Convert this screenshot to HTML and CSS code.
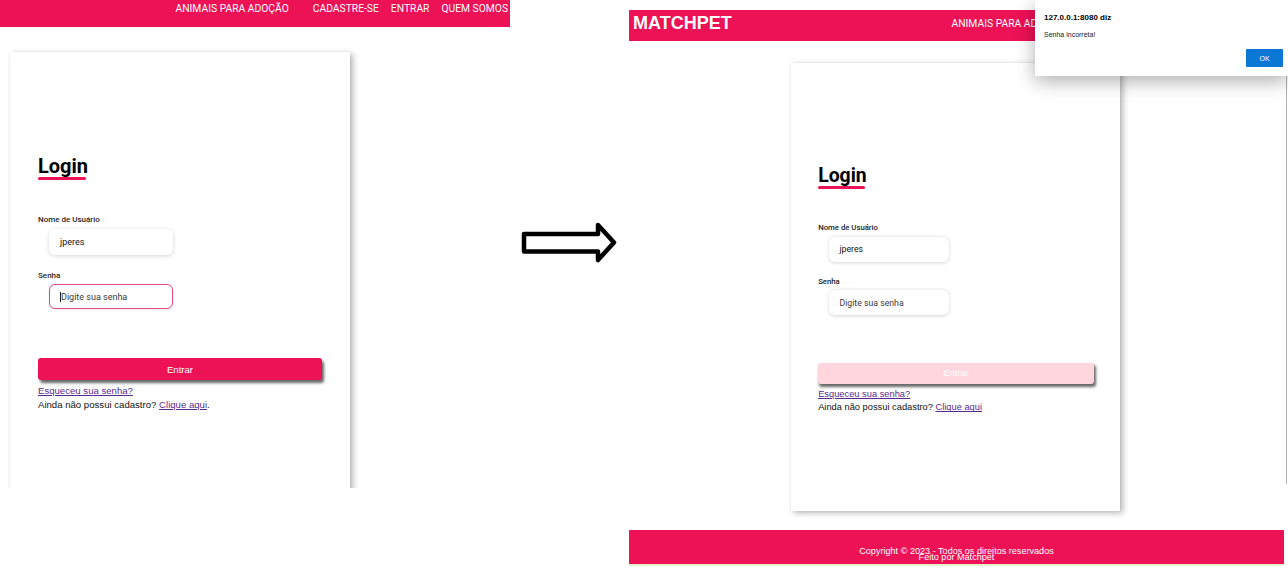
FILE: index.html
```html
<!DOCTYPE html>
<html lang="pt-BR">
<head>
<meta charset="utf-8">
<title>MatchPet - Login</title>
<link rel="stylesheet" href="styles.css">
</head>
<body>
<div class="canvas">
  <section class="shot shot-left">
    <nav class="topnav topnav-left">
      <div class="nav-links">
        <a class="nav-link nav-first">ANIMAIS PARA ADOÇÃO</a>
        <a class="nav-link">CADASTRE-SE</a>
        <a class="nav-link">ENTRAR</a>
        <a class="nav-link">QUEM SOMOS</a>
      </div>
    </nav>
    <div class="card card-left">
      <div class="card-body">
        <h1 class="title">Login</h1>
        <div class="label">Nome de Usuário</div>
        <div class="field"><span class="field-value">jperes</span></div>
        <div class="label label-senha">Senha</div>
        <div class="field field-focus"><span class="caret"></span><span class="field-ph">Digite sua senha</span></div>
        <div class="btn">Entrar</div>
        <div class="links">
          <a class="link">Esqueceu sua senha?</a><br>
          Ainda não possui cadastro? <a class="link">Clique aqui</a>.
        </div>
      </div>
    </div>
  </section>

  <svg class="arrow" width="102" height="46" viewBox="0 0 102 46" aria-hidden="true">
    <path d="M6 14 L80 14 L80 5 L96 22.5 L80 40 L80 31.5 L6 31.5 Z" fill="none" stroke="#000" stroke-width="4.5" stroke-linejoin="round"/>
  </svg>

  <section class="shot shot-right">
    <nav class="topnav topnav-right">
      <span class="brand">MATCHPET</span>
      <div class="nav-links nav-links-right">
        <a class="nav-link nav-first">ANIMAIS PARA ADOÇÃO</a>
        <a class="nav-link">CADASTRE-SE</a>
        <a class="nav-link">ENTRAR</a>
        <a class="nav-link">QUEM SOMOS</a>
      </div>
    </nav>
    <div class="card card-right">
      <div class="card-body">
        <h1 class="title">Login</h1>
        <div class="label">Nome de Usuário</div>
        <div class="field"><span class="field-value">jperes</span></div>
        <div class="label label-senha">Senha</div>
        <div class="field field-plain"><span class="field-ph">Digite sua senha</span></div>
        <div class="btn btn-disabled">Entrar</div>
        <div class="links">
          <a class="link">Esqueceu sua senha?</a><br>
          Ainda não possui cadastro? <a class="link">Clique aqui</a>
        </div>
      </div>
    </div>
    <footer class="footer">
      <p>Copyright © 2023 - Todos os direitos reservados</p>
      <p>Feito por Matchpet</p>
    </footer>
    <div class="footer-line"></div>
  </section>

  <div class="edge-line"></div>

  <div class="dialog">
    <div class="dialog-title">127.0.0.1:8080 diz</div>
    <div class="dialog-msg">Senha incorreta!</div>
    <div class="dialog-actions"><span class="dialog-ok">OK</span></div>
  </div>
</div>
</body>
</html>
```

FILE: styles.css
```css
* { box-sizing: border-box; margin: 0; padding: 0; }
html, body { width: 1288px; height: 571px; overflow: hidden; background: #fff; }
body { font-family: "Liberation Sans", Arial, sans-serif; color: #111; }

.canvas { position: relative; width: 1288px; height: 571px; }

.shot { position: absolute; overflow: hidden; background: #fff; display: flow-root; }
.shot-left { left: 0; top: 0; width: 510px; height: 488px; }
.shot-right { left: 629px; top: 10px; width: 655px; height: 556px; }

/* nav */
.topnav { background: #ed1156; display: flex; align-items: flex-start; color: #fff; }
.topnav-left { height: 27px; justify-content: flex-end; padding: 3px 2px 0 0; }
.topnav-right { height: 31px; padding: 3px 0 0 4px; }
.nav-links { display: flex; gap: 12px; font-family: Roboto, sans-serif; font-size: 10.3px; line-height: 12px; }
.nav-link { color: #fff; text-decoration: none; white-space: nowrap; }
.nav-first { margin-right: 12px; }
.nav-links-right { margin-left: auto; margin-top: 5px; padding-right: 0; }
.brand { font-family: "Liberation Sans", Arial, sans-serif; font-weight: 700; font-size: 18px; line-height: 20px; }

/* card */
.card { display: flow-root; background: #fff; box-shadow: 3px 2px 6px rgba(0,0,0,0.28), 0 0 3px rgba(0,0,0,0.06); }
.card-left { margin: 25px 0 0 10px; width: 340px; height: 470px; }
.card-right { margin: 22px 0 0 162px; width: 329px; height: 448px; }
.card-body { display: flow-root; padding-left: 28px; }
.card-right .card-body { zoom: 0.97; }

.title { display: block; width: max-content; margin-top: 103px; font-family: Roboto, sans-serif; font-weight: 700; font-size: 20px; line-height: 23px; color: #000; }
.card-right .title { margin-top: 105px; }
.title::after { content: ""; display: block; width: 48px; height: 3px; margin-top: -1px; border-radius: 2px; background: #ed1156; }

.label { display: block; margin-top: 35px; font-family: Roboto, sans-serif; font-weight: 500; font-size: 8px; line-height: 10px; color: #1e1e1e; }
.label-senha { margin-top: 16px; }

.field { display: flex; align-items: center; width: 124px; height: 26px; margin: 4px 0 0 11px; padding-left: 11px; border-radius: 6px; background: #fff; box-shadow: 0 1px 4px rgba(0,0,0,0.16); font-family: Roboto, sans-serif; font-size: 9px; color: #111; }
.field-focus { height: 25px; margin-top: 3px; padding-left: 10px; border: 1px solid #e4487c; box-shadow: 0 1px 3px rgba(0,0,0,0.08); }
.field-plain { margin-top: 3px; }
.field-ph { color: #3a3a3a; }
.caret { display: inline-block; width: 1px; height: 10px; background: #222; }

.btn { display: flex; align-items: center; justify-content: center; width: 284px; height: 22px; margin-top: 49px; border-radius: 3px; background: #ed1156; color: #fff; font-family: "Liberation Sans", Arial, sans-serif; font-size: 9.6px; box-shadow: 2px 3px 3px rgba(0,0,0,0.6); }
.btn-disabled { background: #ffd5de; color: #fff; }

.links { margin-top: 4px; font-family: "Liberation Sans", Arial, sans-serif; font-size: 9.6px; line-height: 14px; color: #111; }
.link { color: #5a2b8e; text-decoration: underline; }

/* footer */
.footer { margin-top: 19px; height: 34px; padding-top: 18px; background: #ed1156; color: #fff; text-align: center; font-family: "Liberation Sans", Arial, sans-serif; font-size: 9.1px; line-height: 6px; }
.footer-line { height: 2px; background: #e3f1cc; }

/* arrow */
.arrow { position: absolute; left: 518px; top: 220px; }

/* right edge line */
.edge-line { position: absolute; left: 1286px; top: 70px; width: 1px; height: 414px; background: #b5b5b5; }

/* alert dialog */
.dialog { position: absolute; left: 1035px; top: 0; width: 253px; height: 76px; padding: 13px 5px 0 9px; background: #fff; box-shadow: 0 5px 18px rgba(0,0,0,0.32); display: flex; flex-direction: column; }
.dialog-title { font-family: "Liberation Sans", Arial, sans-serif; font-weight: 700; font-size: 8px; line-height: 10px; color: #000; }
.dialog-msg { margin-top: 7px; font-family: "Liberation Sans", Arial, sans-serif; font-size: 7px; line-height: 9px; color: #222; }
.dialog-actions { display: flex; justify-content: flex-end; margin-top: 10px; }
.dialog-ok { display: flex; align-items: center; justify-content: center; width: 37px; height: 18px; border-radius: 1px; background: #0b78d6; color: #fff; font-family: "Liberation Sans", Arial, sans-serif; font-size: 7px; }
```
